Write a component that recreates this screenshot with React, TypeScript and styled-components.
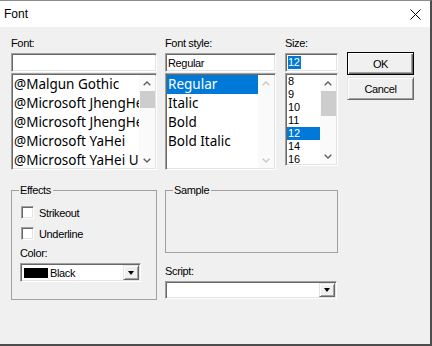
import React from "react";
import styled, { createGlobalStyle, css } from "styled-components";

const GlobalStyle = createGlobalStyle`
  html, body { margin: 0; padding: 0; background: #f0f0f0; }
  * { box-sizing: border-box; }
`;

const dialogFont = css`
  font-family: "Liberation Sans", Arial, sans-serif;
  font-size: 11px;
  letter-spacing: -0.35px;
  color: #000;
`;

const listFont = css`
  font-family: "Noto Sans", "Liberation Sans", sans-serif;
  font-size: 13.5px;
  color: #000;
`;

const sunken = css`
  border: 1px solid;
  border-color: #a0a0a0 #ffffff #ffffff #a0a0a0;
  box-shadow: inset 1px 1px 0 #696969, inset -1px -1px 0 #e3e3e3;
  padding: 1px;
  background: #fff;
`;

const raised = css`
  border: 1px solid;
  border-color: #e3e3e3 #696969 #696969 #e3e3e3;
  box-shadow: inset 1px 1px 0 #ffffff, inset -1px -1px 0 #a0a0a0;
  background: #f0f0f0;
`;

const Window = styled.div`
  width: 432px;
  height: 346px;
  background: #f0f0f0;
  border-top: 1px solid #8c8c8c;
  border-right: 2px solid #4d4d4d;
  border-bottom: 2px solid #4d4d4d;
  display: flex;
  flex-direction: column;
  overflow: hidden;
`;

const TitleBar = styled.div`
  height: 26px;
  flex: none;
  background: #fff;
  display: flex;
  align-items: center;
  justify-content: space-between;
  padding: 0 9px 0 4px;
`;

const Title = styled.span`
  font-family: "Liberation Sans", Arial, sans-serif;
  font-size: 12px;
  color: #000;
`;

const Client = styled.div`
  padding: 10px 0 0 11px;
  display: flex;
  flex-direction: column;
`;

const Row = styled.div<{ $mt?: number }>`
  display: flex;
  align-items: flex-start;
  margin-top: ${(p) => p.$mt ?? 0}px;
`;

const Column = styled.div<{ $w: number; $ml?: number }>`
  width: ${(p) => p.$w}px;
  margin-left: ${(p) => p.$ml ?? 0}px;
  display: flex;
  flex-direction: column;
`;

const Label = styled.div<{ $mt?: number }>`
  ${dialogFont};
  height: 16px;
  line-height: 12px;
  white-space: nowrap;
  margin-top: ${(p) => p.$mt ?? 0}px;
`;

const TextBox = styled.div`
  ${sunken};
  ${dialogFont};
  height: 19px;
  display: flex;
  align-items: center;
  padding-left: 2px;
  white-space: nowrap;
`;

const Selected = styled.span`
  font-family: "Liberation Sans", Arial, sans-serif;
  font-size: 11px;
  background: #0078d7;
  color: #fff;
  line-height: 13px;
  padding: 0 1px 0 0;
`;

const List = styled.div<{ $h: number }>`
  ${sunken};
  margin-top: 1px;
  height: ${(p) => p.$h}px;
  display: flex;
  overflow: hidden;
`;

const Items = styled.div`
  flex: 1;
  min-width: 0;
  overflow: hidden;
`;

const Item = styled.div<{ $h: number; $sel?: boolean; $small?: boolean }>`
  ${(p) =>
    p.$small
      ? css`
          font-family: "Liberation Sans", Arial, sans-serif;
          font-size: 11px;
        `
      : listFont};
  height: ${(p) => p.$h}px;
  line-height: ${(p) => p.$h}px;
  padding-left: 1px;
  white-space: nowrap;
  overflow: hidden;
  background: ${(p) => (p.$sel ? "#0078d7" : "transparent")};
  color: ${(p) => (p.$sel ? "#fff" : "#000")};
`;

const ScrollBar = styled.div`
  width: 16px;
  flex: none;
  display: flex;
  flex-direction: column;
  background: #fafafa;
`;

const ArrowBox = styled.div`
  height: 16px;
  flex: none;
  display: flex;
  align-items: center;
  justify-content: center;
`;

const Track = styled.div`
  flex: 1;
`;

const Thumb = styled.div<{ $h: number }>`
  height: ${(p) => p.$h}px;
  margin-left: 1px;
  background: #cdcdcd;
`;

const PushButton = styled.button<{ $default?: boolean; $mt?: number }>`
  ${raised};
  ${dialogFont};
  height: 23px;
  width: 67px;
  margin: ${(p) => p.$mt ?? 0}px 0 0 0;
  padding: 0;
  ${(p) =>
    p.$default &&
    css`
      border: 1px solid #000;
      box-shadow: inset 1px 1px 0 #ffffff, inset -1px -1px 0 #696969,
        inset -2px -2px 0 #a0a0a0;
    `}
`;

const GroupBox = styled.fieldset<{ $w: number; $h: number }>`
  margin: 0;
  min-width: 0;
  width: ${(p) => p.$w}px;
  height: ${(p) => p.$h}px;
  padding: 10px 8px 0 8px;
  border: 1px solid #a0a0a0;
  display: flex;
  flex-direction: column;
`;

const Legend = styled.legend`
  ${dialogFont};
  line-height: 12px;
  padding: 0 2px 0 1px;
  margin-left: -1px;
`;

const CheckRow = styled.label<{ $mt?: number }>`
  ${dialogFont};
  display: flex;
  align-items: center;
  gap: 5px;
  height: 13px;
  margin-top: ${(p) => p.$mt ?? 0}px;
  margin-left: 1px;
`;

const CheckBox = styled.span`
  ${sunken};
  width: 13px;
  height: 13px;
  flex: none;
`;

const Combo = styled.div<{ $w: number; $h: number }>`
  ${sunken};
  width: ${(p) => p.$w}px;
  height: ${(p) => p.$h}px;
  display: flex;
  align-items: stretch;
`;

const ComboValue = styled.div`
  ${dialogFont};
  flex: 1;
  display: flex;
  align-items: center;
  padding-left: 2px;
  gap: 2px;
`;

const Swatch = styled.span<{ $color: string }>`
  width: 24px;
  height: 10px;
  background: ${(p) => p.$color};
`;

const DropButton = styled.div`
  ${raised};
  width: 16px;
  flex: none;
  display: flex;
  align-items: center;
  justify-content: center;
`;

const Triangle = styled.span`
  width: 0;
  height: 0;
  border-left: 3.5px solid transparent;
  border-right: 3.5px solid transparent;
  border-top: 4px solid #000;
`;

const Chevron = ({ dir, disabled }: { dir: "up" | "down"; disabled?: boolean }) => (
  <svg width="8" height="5" viewBox="0 0 8 5">
    <polyline
      points={dir === "up" ? "0.7,4.3 4,1 7.3,4.3" : "0.7,0.7 4,4 7.3,0.7"}
      fill="none"
      stroke={disabled ? "#c8c8c8" : "#606060"}
      strokeWidth="1.4"
    />
  </svg>
);

const CloseIcon = () => (
  <svg width="11" height="11" viewBox="0 0 11 11">
    <path d="M0.5 0.5 L10.5 10.5 M10.5 0.5 L0.5 10.5" stroke="#000" strokeWidth="1" />
  </svg>
);

const Scroll = ({ thumb, disabled }: { thumb?: number; disabled?: boolean }) => (
  <ScrollBar>
    <ArrowBox>
      <Chevron dir="up" disabled={disabled} />
    </ArrowBox>
    <Track>{thumb ? <Thumb $h={thumb} /> : null}</Track>
    <ArrowBox>
      <Chevron dir="down" disabled={disabled} />
    </ArrowBox>
  </ScrollBar>
);

const fonts = [
  "@Malgun Gothic",
  "@Microsoft JhengHei",
  "@Microsoft JhengHei UI",
  "@Microsoft YaHei",
  "@Microsoft YaHei UI",
];
const styles = ["Regular", "Italic", "Bold", "Bold Italic"];
const sizes = ["8", "9", "10", "11", "12", "14", "16", "18", "20"];

export default function App() {
  return (
    <>
      <GlobalStyle />
      <Window>
        <TitleBar>
          <Title>Font</Title>
          <CloseIcon />
        </TitleBar>
        <Client>
          <Row>
            <Column $w={146}>
              <Label>Font:</Label>
              <TextBox />
              <List $h={97}>
                <Items>
                  {fonts.map((f) => (
                    <Item key={f} $h={19}>
                      {f}
                    </Item>
                  ))}
                </Items>
                <Scroll thumb={17} />
              </List>
            </Column>
            <Column $w={111} $ml={8}>
              <Label>Font style:</Label>
              <TextBox>Regular</TextBox>
              <List $h={97}>
                <Items>
                  {styles.map((s, i) => (
                    <Item key={s} $h={19} $sel={i === 0}>
                      {s}
                    </Item>
                  ))}
                </Items>
                <Scroll disabled />
              </List>
            </Column>
            <Column $w={53} $ml={9}>
              <Label>Size:</Label>
              <TextBox>
                <Selected>12</Selected>
              </TextBox>
              <List $h={93}>
                <Items>
                  {sizes.map((s) => (
                    <Item key={s} $h={13} $small $sel={s === "12"}>
                      {s}
                    </Item>
                  ))}
                </Items>
                <Scroll thumb={25} />
              </List>
            </Column>
            <Column $w={67} $ml={9}>
              <PushButton $default $mt={15}>
                OK
              </PushButton>
              <PushButton $mt={2}>Cancel</PushButton>
            </Column>
          </Row>
          <Row $mt={14}>
            <GroupBox $w={146} $h={116}>
              <Legend>Effects</Legend>
              <CheckRow>
                <CheckBox />
                Strikeout
              </CheckRow>
              <CheckRow $mt={8}>
                <CheckBox />
                Underline
              </CheckRow>
              <Label $mt={7}>Color:</Label>
              <Combo $w={121} $h={19}>
                <ComboValue>
                  <Swatch $color="#000" />
                  Black
                </ComboValue>
                <DropButton>
                  <Triangle />
                </DropButton>
              </Combo>
            </GroupBox>
            <Column $w={173} $ml={8}>
              <GroupBox $w={173} $h={69}>
                <Legend>Sample</Legend>
              </GroupBox>
              <Label $mt={12}>Script:</Label>
              <Combo $w={172} $h={18}>
                <ComboValue />
                <DropButton>
                  <Triangle />
                </DropButton>
              </Combo>
            </Column>
          </Row>
        </Client>
      </Window>
    </>
  );
}
